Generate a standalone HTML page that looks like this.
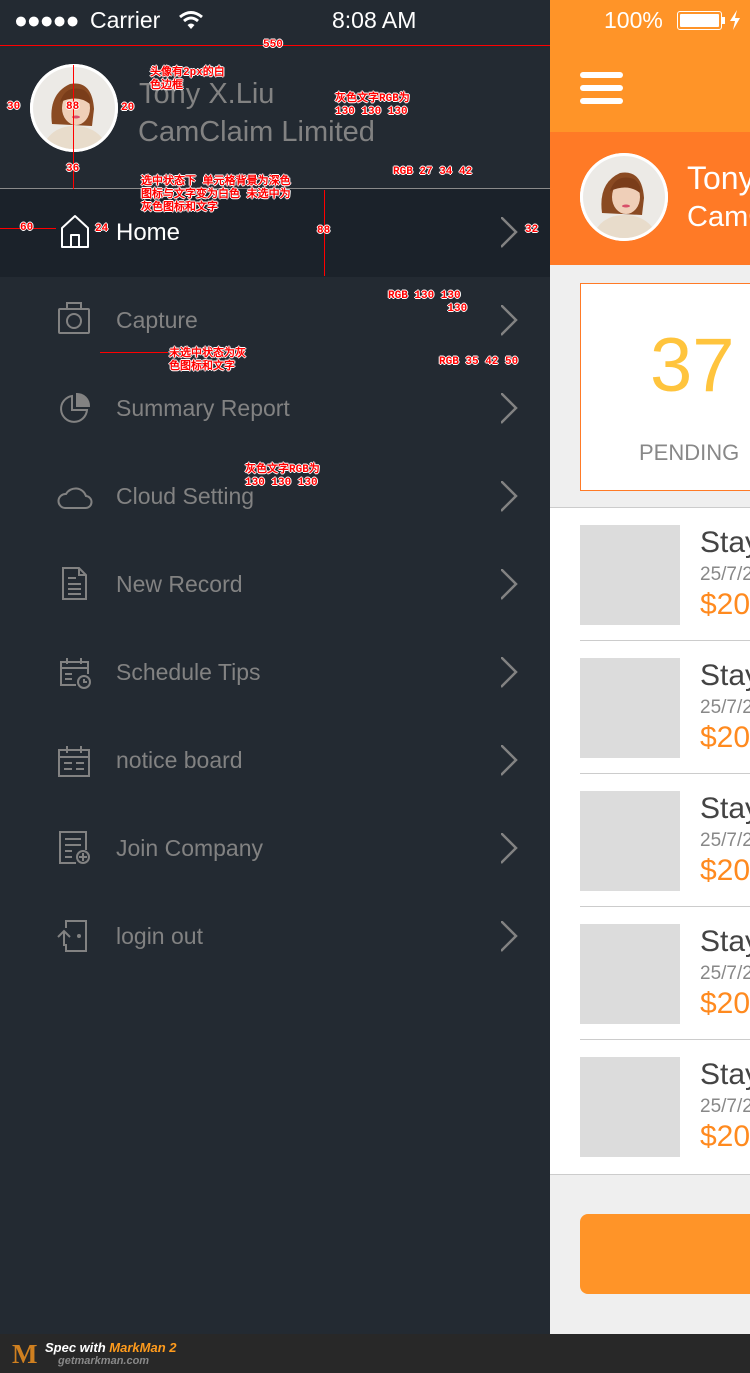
<!DOCTYPE html>
<html><head><meta charset="utf-8">
<style>
*{margin:0;padding:0;box-sizing:border-box}
html,body{width:750px;height:1373px;overflow:hidden}
body{position:relative;background:#232a32;font-family:"Liberation Sans","Noto Sans CJK SC",sans-serif}
.a{position:absolute}
.t{position:absolute;white-space:nowrap;line-height:1}
.item .t{left:116px;font-size:23px;color:#828282}
.ann{position:absolute;color:#f00;font-size:11px;font-weight:bold;line-height:13px;text-shadow:0 0 1px #fff,1px 0 0 #fff,-1px 0 0 #fff,0 1px 0 #fff,0 -1px 0 #fff;white-space:nowrap;font-family:"Liberation Mono","WenQuanYi Zen Hei",monospace}
.rp{position:absolute;left:550px;top:0;width:200px;height:1334px;overflow:hidden;background:#efefef}
.row{position:absolute;left:0;width:200px;height:133px;background:#fff}
.row .img{position:absolute;left:30px;top:17px;width:100px;height:100px;background:#dcdcdc}
.row .s{position:absolute;left:150px;top:20px;font-size:30px;color:#444;line-height:1;white-space:nowrap}
.row .d{position:absolute;left:150px;top:57px;font-size:19px;color:#888;line-height:1;white-space:nowrap}
.row .p{position:absolute;left:150px;top:82px;font-size:30px;color:#ff8a1f;line-height:1;white-space:nowrap}
.row .ln{position:absolute;left:30px;right:0;bottom:0;height:1px;background:#ccc}
</style></head><body>
<svg width="0" height="0" style="position:absolute"><defs>
<clipPath id="cc"><circle cx="44" cy="44" r="41"/></clipPath>
<g id="av">
<circle cx="44" cy="44" r="44" fill="#fff"/>
<g clip-path="url(#cc)">
<rect width="88" height="88" fill="#eceae6"/>
<path d="M22 60 Q18 30 40 20 Q62 16 64 45 L62 62 Z" fill="#8a4a22"/>
<ellipse cx="46" cy="44" rx="14" ry="17" fill="#efcfb8"/>
<path d="M30 38 Q36 20 54 26 Q62 32 60 40 Q48 30 30 38Z" fill="#7a3d1a"/>
<path d="M10 90 Q18 62 44 62 Q72 62 80 90Z" fill="#e8dccb"/>
<ellipse cx="46" cy="53" rx="4" ry="1.5" fill="#d8506a"/>
</g>
<circle cx="44" cy="44" r="43" fill="none" stroke="#fff" stroke-width="2"/>
</g>
<path id="chev" d="M0 0 L15 15 L0 30" fill="none" stroke="#828282" stroke-width="2.5"/>
</defs></svg>

<div class="t" style="left:14px;top:9px;font-size:23px;color:#fff;letter-spacing:-1px">●●●●●</div>
<div class="t" style="left:90px;top:9px;font-size:23px;color:#fff">Carrier</div>
<svg class="a" style="left:178px;top:10px" width="26" height="20" viewBox="0 0 26 20"><path d="M2 7 Q13 -2 24 7" fill="none" stroke="#fff" stroke-width="3"/><path d="M6 11 Q13 5 20 11" fill="none" stroke="#fff" stroke-width="3"/><path d="M9.5 15 L13 19 L16.5 15 Q13 12 9.5 15Z" fill="#fff"/></svg>
<div class="t" style="left:332px;top:9px;font-size:23px;color:#fff">8:08 AM</div>

<svg class="a" style="left:30px;top:64px" width="88" height="88"><use href="#av"/></svg>
<div class="t" style="left:139px;top:80px;font-size:29px;color:#828282">Tony X.Liu</div>
<div class="t" style="left:138px;top:118px;font-size:29px;color:#828282">CamClaim Limited</div>
<div class="a" style="left:0;top:188px;width:550px;height:1px;background:#8a8a8a"></div>

<div class="a" style="left:0;top:189px;width:550px;height:88px;background:#1b222a"></div>
<svg class="a" style="left:58px;top:213px" width="34" height="36" viewBox="0 0 34 36"><path d="M4 15 L17 3 L30 15 V34 H4 Z M13 34 V22 H21 V34" fill="none" stroke="#fff" stroke-width="2" stroke-linejoin="round"/></svg>
<div class="t" style="left:116px;top:221px;font-size:24px;color:#fff">Home</div>
<svg class="a" style="left:501px;top:217px" width="20" height="32"><use href="#chev"/></svg>

<div class="item">
<svg class="a" style="left:57px;top:301px" width="34" height="34" viewBox="0 0 34 34" fill="none" stroke="#828282" stroke-width="2"><rect x="2" y="8" width="30" height="24" rx="1"/><path d="M10 8 V2 H24 V8"/><circle cx="17" cy="20" r="7"/></svg>
<div class="t" style="top:309px">Capture</div>
<svg class="a" style="left:501px;top:305px" width="20" height="32"><use href="#chev"/></svg>

<svg class="a" style="left:58px;top:391px" width="34" height="34" viewBox="0 0 34 34"><path d="M14 5 A13 13 0 1 0 29 19 H14 Z" fill="none" stroke="#828282" stroke-width="2"/><path d="M18 2 A13 13 0 0 1 32 16 H18Z" fill="#828282"/></svg>
<div class="t" style="top:397px">Summary Report</div>
<svg class="a" style="left:501px;top:393px" width="20" height="32"><use href="#chev"/></svg>

<svg class="a" style="left:57px;top:481px" width="36" height="30" viewBox="0 0 36 30"><path d="M8 27 H28 A6 6 0 0 0 29 15 A11 11 0 0 0 9 13 A7 7 0 0 0 8 27Z" fill="none" stroke="#828282" stroke-width="2"/></svg>
<div class="t" style="top:485px">Cloud Setting</div>
<svg class="a" style="left:501px;top:481px" width="20" height="32"><use href="#chev"/></svg>

<svg class="a" style="left:60px;top:566px" width="30" height="36" viewBox="0 0 30 36" fill="none" stroke="#828282" stroke-width="2"><path d="M3 2 H19 L26 9 V33 H3 Z M19 2 V9 H26"/><path d="M8 12 H16 M8 18 H21 M8 23 H21 M8 28 H21"/></svg>
<div class="t" style="top:573px">New Record</div>
<svg class="a" style="left:501px;top:569px" width="20" height="32"><use href="#chev"/></svg>

<svg class="a" style="left:58px;top:654px" width="36" height="36" viewBox="0 0 36 36" fill="none" stroke="#828282" stroke-width="2"><path d="M18 31 H3 V8 H30 V20"/><path d="M3 14 H30 M9 4 V10 M23 4 V10 M7 20 H14 M7 25 H14"/><circle cx="26" cy="28" r="6"/><path d="M26 25 V28 H29"/></svg>
<div class="t" style="top:661px">Schedule Tips</div>
<svg class="a" style="left:501px;top:657px" width="20" height="32"><use href="#chev"/></svg>

<svg class="a" style="left:57px;top:742px" width="36" height="36" viewBox="0 0 36 36" fill="none" stroke="#828282" stroke-width="2"><rect x="2" y="8" width="30" height="26"/><path d="M2 15 H32 M10 4 V11 M24 4 V11 M7 21 H15 M19 21 H27 M7 27 H15 M19 27 H27"/></svg>
<div class="t" style="top:749px">notice board</div>
<svg class="a" style="left:501px;top:745px" width="20" height="32"><use href="#chev"/></svg>

<svg class="a" style="left:57px;top:830px" width="36" height="36" viewBox="0 0 36 36" fill="none" stroke="#828282" stroke-width="2"><path d="M19 33 H3 V2 H29 V20"/><path d="M8 9 H24 M8 15 H24 M8 21 H15 M8 27 H15"/><circle cx="26" cy="27" r="6"/><path d="M26 23 V31 M22 27 H30"/></svg>
<div class="t" style="top:837px">Join Company</div>
<svg class="a" style="left:501px;top:833px" width="20" height="32"><use href="#chev"/></svg>

<svg class="a" style="left:56px;top:918px" width="34" height="36" viewBox="0 0 34 36" fill="none" stroke="#828282" stroke-width="2"><path d="M10 10 V3 H30 V33 H10 V26"/><path d="M8 28 V14 M2 19 L8 13 L14 19"/><circle cx="23" cy="18" r="1" fill="#828282"/></svg>
<div class="t" style="top:925px">login out</div>
<svg class="a" style="left:501px;top:921px" width="20" height="32"><use href="#chev"/></svg>
</div>

<div class="a" style="left:0;top:45px;width:550px;height:1px;background:#f00"></div>
<div class="ann" style="left:263px;top:39px">550</div>
<div class="a" style="left:73px;top:65px;width:1px;height:124px;background:#f00"></div>
<div class="ann" style="left:66px;top:101px">88</div>
<div class="ann" style="left:66px;top:163px">36</div>
<div class="ann" style="left:7px;top:101px">30</div>
<div class="ann" style="left:121px;top:102px">20</div>
<div class="ann" style="left:150px;top:67px">头像有2px的白<br>色边框</div>
<div class="ann" style="left:335px;top:93px">灰色文字RGB为<br>130 130 130</div>
<div class="ann" style="left:141px;top:176px">选中状态下 单元格背景为深色<br>图标与文字变为白色 未选中为<br>灰色图标和文字</div>
<div class="ann" style="left:393px;top:166px">RGB 27 34 42</div>
<div class="a" style="left:324px;top:190px;width:1px;height:86px;background:#f00"></div>
<div class="ann" style="left:317px;top:225px">88</div>
<div class="a" style="left:0;top:228px;width:56px;height:1px;background:#f00"></div>
<div class="ann" style="left:20px;top:222px">60</div>
<div class="ann" style="left:95px;top:223px">24</div>
<div class="ann" style="left:525px;top:224px">32</div>
<div class="ann" style="left:388px;top:290px">RGB 130 130<br>&nbsp;&nbsp;&nbsp;&nbsp;&nbsp;&nbsp;&nbsp;&nbsp;&nbsp;130</div>
<div class="ann" style="left:169px;top:348px">未选中状态为灰<br>色图标和文字</div>
<div class="a" style="left:100px;top:352px;width:68px;height:1px;background:#f00"></div>
<div class="ann" style="left:439px;top:356px">RGB 35 42 50</div>
<div class="ann" style="left:245px;top:464px">灰色文字RGB为<br>130 130 130</div>

<div class="rp">
<div class="a" style="left:0;top:0;width:200px;height:132px;background:#ff9428"></div>
<div class="t" style="left:54px;top:9px;font-size:23px;color:#fff">100%</div>
<div class="a" style="left:127px;top:11px;width:45px;height:19px;border:1.5px solid #fff;border-radius:3px;padding:2px"><div style="width:100%;height:100%;background:#fff;border-radius:1px"></div></div>
<div class="a" style="left:172px;top:17px;width:3px;height:7px;background:#fff"></div>
<svg class="a" style="left:179px;top:10px" width="12" height="20" viewBox="0 0 12 20"><path d="M8 0 L1 11 H6 L4 20 L11 8 H6 Z" fill="#fff"/></svg>
<div class="a" style="left:30px;top:72px;width:43px;height:6px;background:#fff;border-radius:3px"></div>
<div class="a" style="left:30px;top:85px;width:43px;height:6px;background:#fff;border-radius:3px"></div>
<div class="a" style="left:30px;top:98px;width:43px;height:6px;background:#fff;border-radius:3px"></div>
<div class="a" style="left:0;top:132px;width:200px;height:133px;background:#ff7a26"></div>
<svg class="a" style="left:30px;top:153px" width="88" height="88"><use href="#av"/></svg>
<div class="t" style="left:137px;top:162px;font-size:32px;color:#fff">Tony X.Liu</div>
<div class="t" style="left:137px;top:203px;font-size:29px;color:#fff">CamClaim Limited</div>
<div class="a" style="left:30px;top:283px;width:190px;height:208px;background:#fff;border:1px solid #ff7a26"></div>
<div class="t" style="left:100px;top:328px;font-size:76px;color:#ffc43d">37</div>
<div class="t" style="left:89px;top:442px;font-size:22px;color:#888">PENDING</div>
<div class="a" style="left:0;top:507px;width:200px;height:1px;background:#ccc"></div>
<div class="row" style="top:508px"><div class="img"></div><div class="s">Stay</div><div class="d">25/7/2015</div><div class="p">$200</div><div class="ln"></div></div>
<div class="row" style="top:641px"><div class="img"></div><div class="s">Stay</div><div class="d">25/7/2015</div><div class="p">$200</div><div class="ln"></div></div>
<div class="row" style="top:774px"><div class="img"></div><div class="s">Stay</div><div class="d">25/7/2015</div><div class="p">$200</div><div class="ln"></div></div>
<div class="row" style="top:907px"><div class="img"></div><div class="s">Stay</div><div class="d">25/7/2015</div><div class="p">$200</div><div class="ln"></div></div>
<div class="row" style="top:1040px;height:134px"><div class="img"></div><div class="s">Stay</div><div class="d">25/7/2015</div><div class="p">$200</div></div>
<div class="a" style="left:0;top:1174px;width:200px;height:1px;background:#ccc"></div>
<div class="a" style="left:30px;top:1214px;width:200px;height:80px;background:#ff9428;border-radius:8px"></div>
</div>

<div class="a" style="left:0;top:1334px;width:750px;height:39px;background:#282828"></div>
<div class="t" style="left:12px;top:1341px;font-size:27px;font-weight:bold;color:#d08020;font-family:'Liberation Serif',serif">M</div>
<div class="t" style="left:45px;top:1341px;font-size:13px;font-weight:bold;font-style:italic;color:#fff">Spec with <span style="color:#ff9b1c">MarkMan 2</span></div>
<div class="t" style="left:58px;top:1356px;font-size:11px;font-weight:bold;font-style:italic;color:#888">getmarkman.com</div>
</body></html>
